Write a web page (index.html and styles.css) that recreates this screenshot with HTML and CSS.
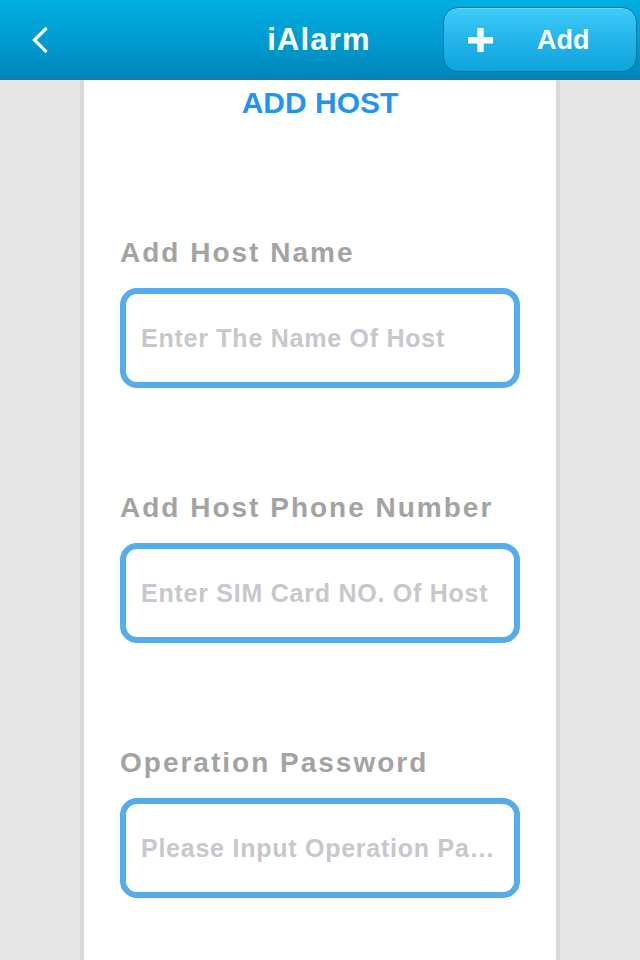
FILE: index.html
```html
<!DOCTYPE html>
<html lang="en">
<head>
<meta charset="utf-8">
<title>iAlarm - Add Host</title>
<link rel="stylesheet" href="styles.css">
</head>
<body>
<header class="topbar">
  <div class="topbar-left">
    <button class="back-btn" type="button" aria-label="Back">
      <svg width="16" height="26" viewBox="0 0 16 26"><polyline points="13.5,2 2.5,13 13.5,24" fill="none" stroke="#ffffff" stroke-width="3.2" stroke-linecap="square" stroke-linejoin="miter"/></svg>
    </button>
  </div>
  <h1 class="app-title">iAlarm</h1>
  <div class="topbar-right">
    <button class="add-btn" type="button">
      <svg class="plus" width="25" height="24" viewBox="0 0 25 24"><rect x="0" y="9" width="25" height="6.5" rx="1" fill="#ffffff"/><rect x="9.25" y="0" width="6.5" height="24" rx="1" fill="#ffffff"/></svg>
      <span class="add-label">Add</span>
    </button>
  </div>
</header>
<main class="panel">
  <h2 class="section-title">ADD HOST</h2>
  <div class="field">
    <div class="field-label">Add Host Name</div>
    <div class="field-box"><span class="placeholder">Enter The Name Of Host</span></div>
  </div>
  <div class="field">
    <div class="field-label">Add Host Phone Number</div>
    <div class="field-box"><span class="placeholder">Enter SIM Card NO. Of Host</span></div>
  </div>
  <div class="field">
    <div class="field-label">Operation Password</div>
    <div class="field-box"><span class="placeholder">Please Input Operation Pa…</span></div>
  </div>
</main>
</body>
</html>
```
FILE: styles.css
```css
* { box-sizing: border-box; }
html, body {
  margin: 0;
  padding: 0;
  height: 960px;
  overflow: hidden;
  background: #e6e6e6;
  font-family: "Liberation Sans", Arial, sans-serif;
}
.topbar {
  height: 80px;
  background: linear-gradient(to bottom, #00afe1 0%, #009cd0 50%, #0084b8 100%);
  display: grid;
  grid-template-columns: 1fr auto 1fr;
  align-items: center;
}
.topbar-left { display: flex; align-items: center; }
.back-btn {
  margin-left: 32px;
  padding: 0;
  border: 0;
  background: none;
  display: flex;
  align-items: center;
}
.app-title {
  margin: 0;
  color: #ffffff;
  font-size: 31px;
  font-weight: bold;
  letter-spacing: 1.2px;
  line-height: 36px;
  padding-right: 2px;
}
.topbar-right { display: flex; justify-content: flex-end; }
.add-btn {
  width: 194px;
  height: 65px;
  margin-right: 3px;
  margin-top: -1px;
  border: 1px solid #0a6f9f;
  border-radius: 15px;
  background: linear-gradient(to bottom, #3fccfa 0%, #22b5ea 50%, #0fa4dc 100%);
  box-shadow: inset 0 1px 0 rgba(255,255,255,0.25);
  display: flex;
  align-items: center;
  padding: 0 0 0 24px;
  gap: 44px;
}
.plus { display: block; }
.add-label {
  color: #ffffff;
  font-family: "Liberation Sans", Arial, sans-serif;
  font-size: 27px;
  font-weight: bold;
  line-height: 30px;
}
.panel {
  width: 480px;
  height: 880px;
  margin: 0 auto;
  background: #ffffff;
  border-left: 4px solid #d9d9d9;
  border-right: 4px solid #d9d9d9;
  padding: 6px 36px 0 36px;
}
.section-title {
  margin: 0 0 117px 0;
  text-align: center;
  color: #1f95f1;
  font-size: 30px;
  font-weight: bold;
  line-height: 34px;
}
.field { margin-bottom: 104px; }
.field-label {
  color: #a3a3a3;
  font-size: 28px;
  font-weight: bold;
  letter-spacing: 2px;
  line-height: 32px;
  margin-bottom: 19px;
  white-space: nowrap;
}
.field-box {
  width: 400px;
  height: 100px;
  border: 6px solid #55acea;
  border-radius: 17px;
  display: flex;
  align-items: center;
  padding-left: 15px;
}
.placeholder {
  color: #c7c7cc;
  font-size: 25px;
  font-weight: bold;
  letter-spacing: 0.75px;
  line-height: 28px;
  white-space: nowrap;
}
```
